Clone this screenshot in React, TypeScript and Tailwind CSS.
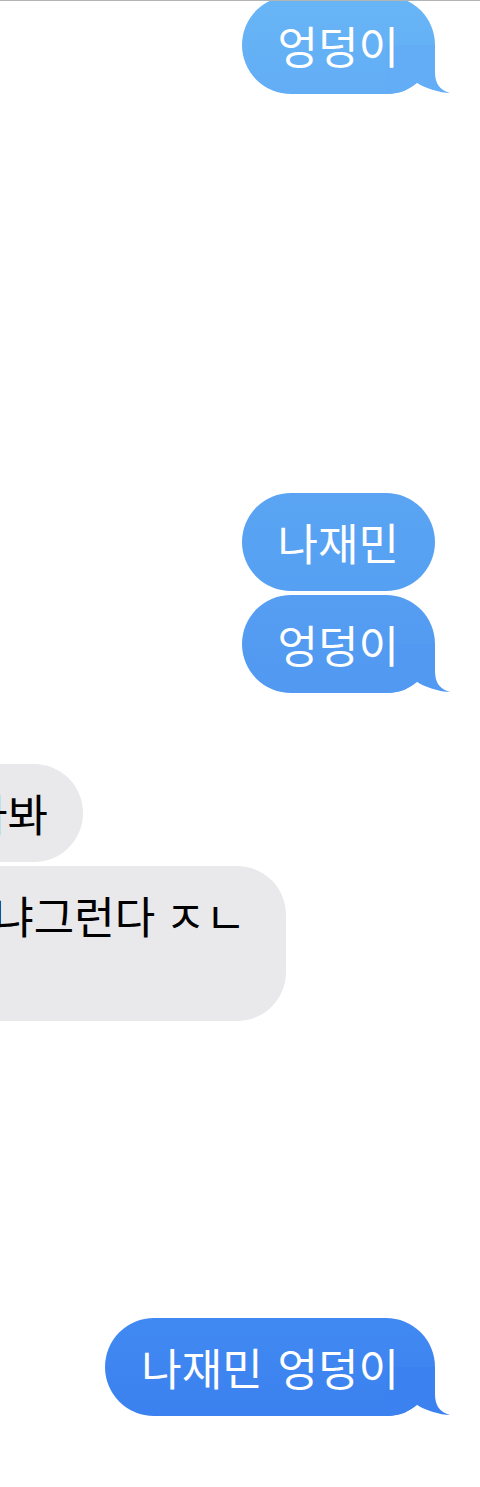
import type { ReactNode } from 'react';

const font = { fontFamily: '"Noto Sans CJK KR", "Noto Sans", sans-serif' };

// the little curl at the bottom right of the last bubble in a group
function Tail({ color }: { color: string }) {
  return (
    <svg
      width="65"
      height="50"
      viewBox="-49 -49 65 50"
      className="absolute right-[-16px] bottom-[-1px]"
    >
      <path
        d="M0 -49 L0 -22 C0 -10 5 -4 15 -1 C6 -1 -12 -6 -19 -12 C-25 -5 -33 0 -49 0 L-49 -49 Z"
        fill={color}
      />
    </svg>
  );
}

function Sent({
  children,
  bg,
  tail,
  className = '',
}: {
  children: ReactNode;
  bg: string;
  tail?: string;
  className?: string;
}) {
  return (
    <div className={`flex justify-end pr-[45px] ${className}`}>
      <div
        className={`relative rounded-[49px] px-[36px] py-[20.5px] text-[44px] leading-[57px] text-white whitespace-nowrap [word-spacing:5px] ${bg}`}
      >
        <span className="relative z-10">{children}</span>
        {tail && <Tail color={tail} />}
      </div>
    </div>
  );
}

export default function App() {
  return (
    <div className="min-h-[1487px] w-[480px] overflow-hidden bg-white" style={font}>
      <div className="relative z-20 h-px bg-[#b4b4b4]" />

      <Sent bg="bg-gradient-to-b from-[#68b5f6] to-[#62adf5]" tail="#62adf5" className="-mt-[5px]">
        엉덩이
      </Sent>

      <Sent bg="bg-gradient-to-b from-[#5aa4f3] to-[#56a0f3]" className="mt-[399px]">
        나재민
      </Sent>
      <Sent bg="bg-gradient-to-b from-[#559ef2] to-[#5199f1]" tail="#5199f1" className="mt-[4px]">
        엉덩이
      </Sent>

      {/* received messages, cut off at the left edge */}
      <div className="mt-[71px] flex w-[83px] justify-end">
        <div className="shrink-0 whitespace-nowrap rounded-[49px] bg-[#e9e9eb] py-[20.5px] pl-[34px] pr-[35px] text-[44px] leading-[57px] text-black">
          찾아봐
        </div>
      </div>
      <div className="mt-[4px] flex w-[286px] justify-end">
        <div className="shrink-0 whitespace-nowrap rounded-[49px] bg-[#e9e9eb] py-[20.5px] pl-[34px] pr-[40px] text-[44px] leading-[57px] text-black">
          아니 진짜 왜 자꾸 쳐다보냐그런다 ㅈㄴ
          <br />
          웃겨
        </div>
      </div>

      <Sent bg="bg-gradient-to-b from-[#4189f2] to-[#3b81ef]" tail="#3b81ef" className="mt-[297px]">
        나재민 엉덩이
      </Sent>
    </div>
  );
}
